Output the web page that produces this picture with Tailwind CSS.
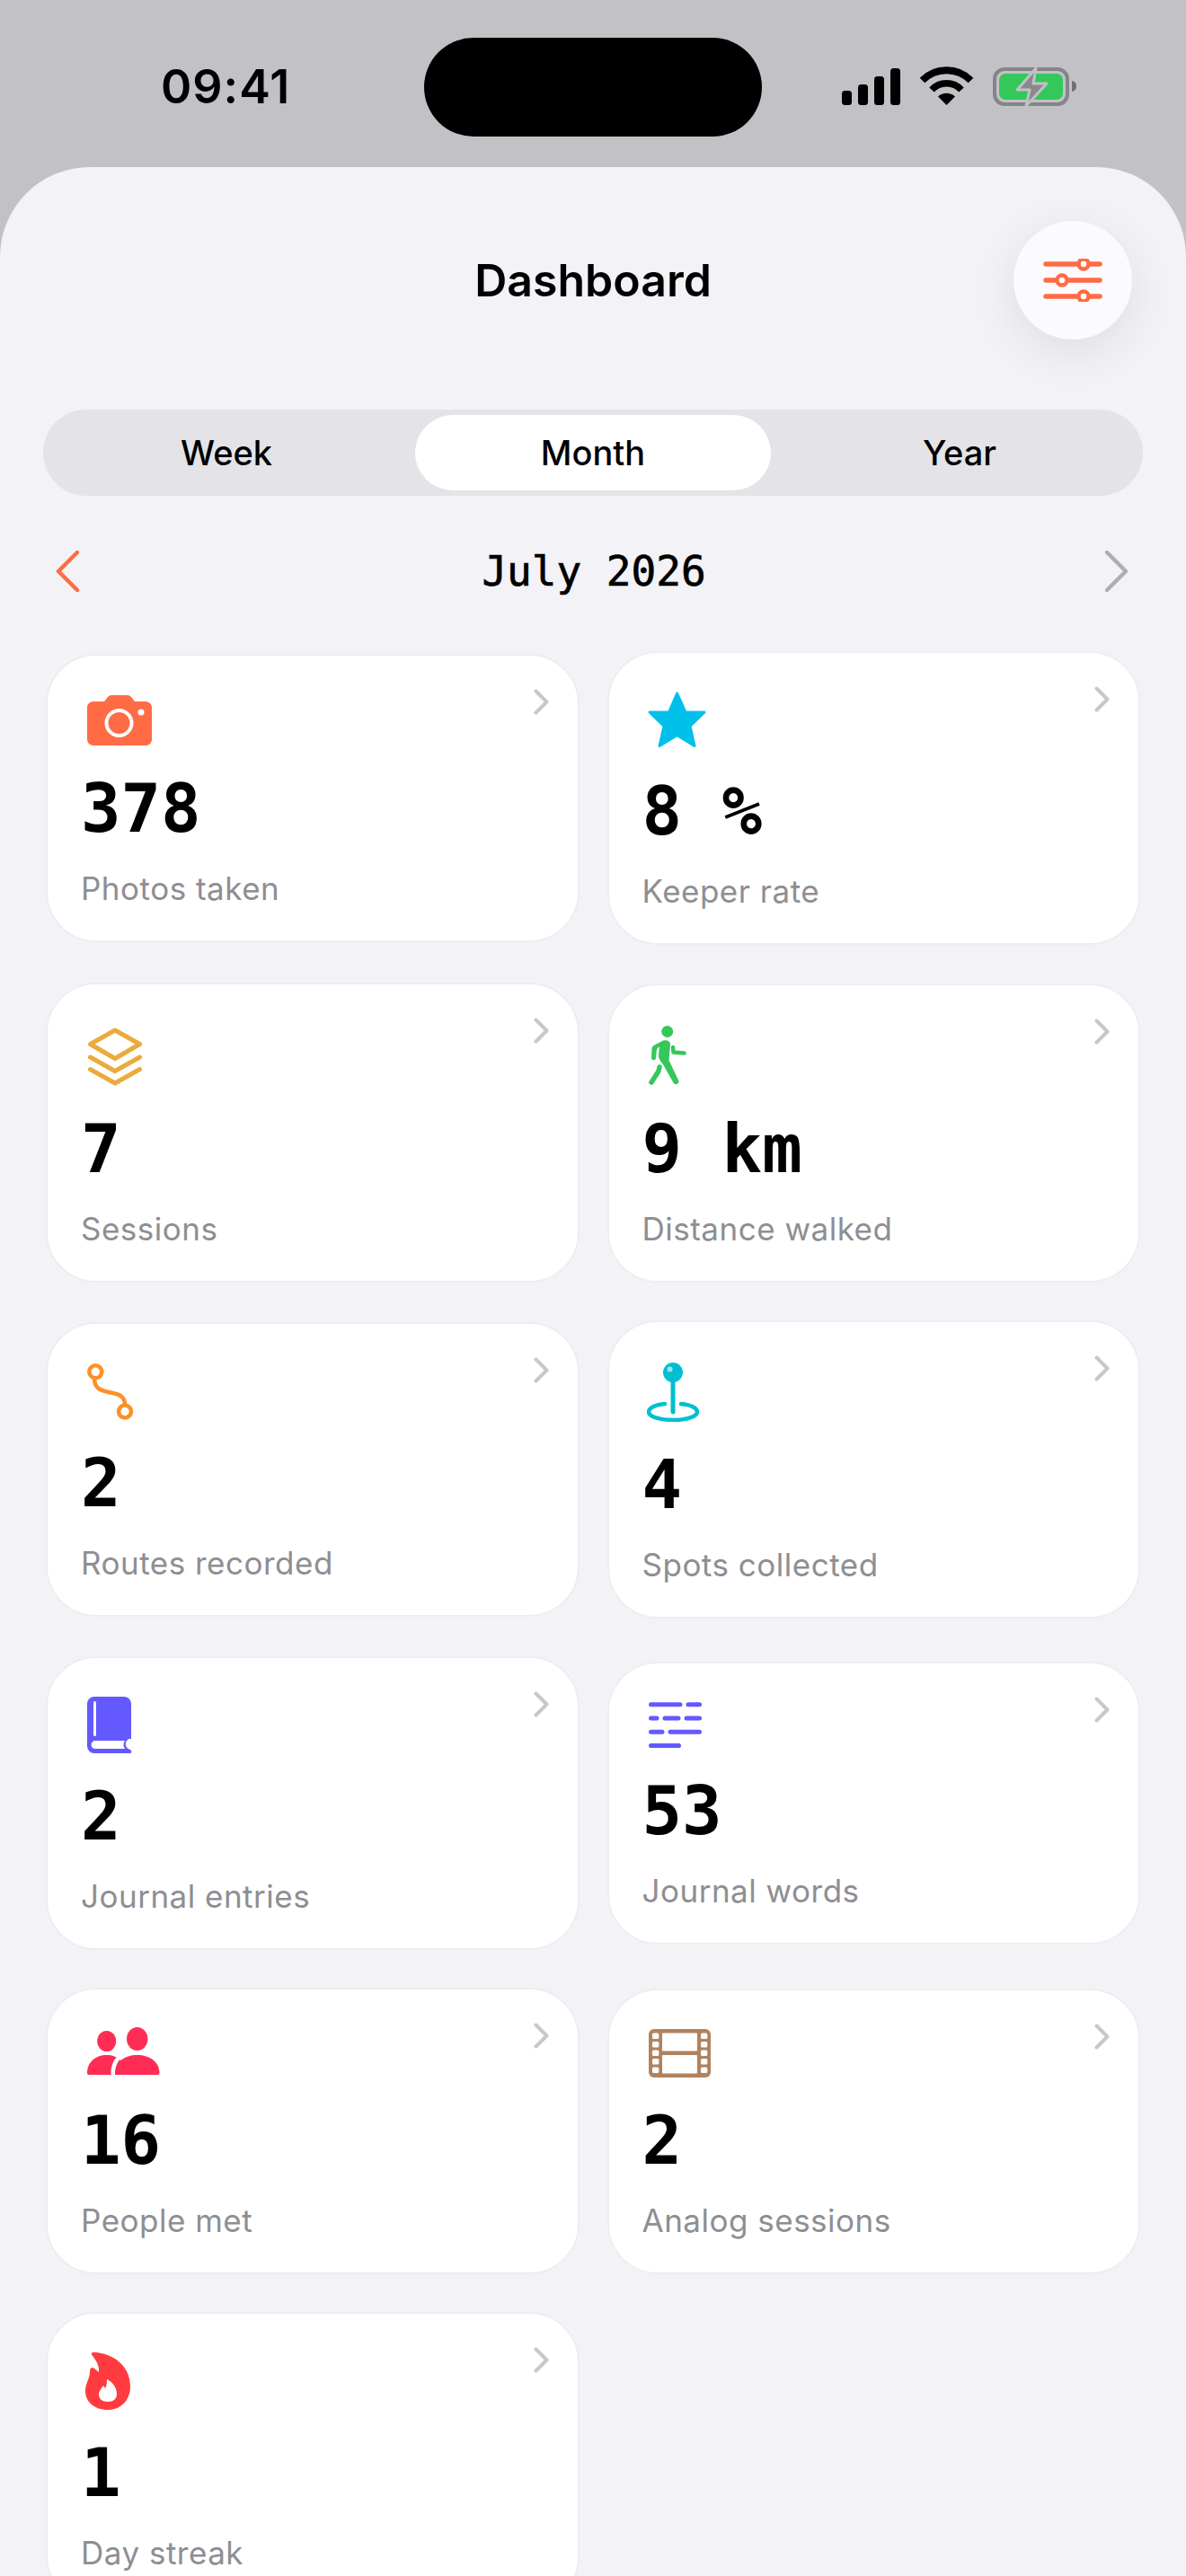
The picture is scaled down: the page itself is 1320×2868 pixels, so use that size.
<!DOCTYPE html>
<html lang="en">
<head>
  <meta charset="UTF-8" />
  <title>Dashboard</title>
  <script src="https://cdn.jsdelivr.net/npm/@tailwindcss/browser@4"></script>
</head>
<body class="bg-[#c2c1c6] [font-family:'Inter',sans-serif]">
<div class="w-[1320px] h-[2868px] overflow-hidden flex flex-col">

  <!-- status bar -->
  <div class="h-[186px] shrink-0 pt-[42px] pl-[179px] flex items-start">
    <div class="w-[293px] h-[110px] flex items-center text-[52px] font-semibold text-black tracking-[1px]">09:41</div>
    <div class="w-[376px] h-[110px] rounded-full bg-black"></div>
    <div class="ml-[89px] h-[110px] flex items-center">
      <svg width="262" height="46" viewBox="937 74 262 46">
        <rect x="937" y="101" width="11" height="16" rx="3.5" fill="#000"/>
        <rect x="955" y="94" width="11" height="23" rx="3.5" fill="#000"/>
        <rect x="973" y="85" width="11" height="32" rx="3.5" fill="#000"/>
        <rect x="991" y="76" width="11" height="41" rx="3.5" fill="#000"/>
        <path d="M1026.5 89.5A38 38 0 0 1 1080.5 89.5" fill="none" stroke="#000" stroke-width="8"/>
        <path d="M1037 100A22.5 22.5 0 0 1 1070 100" fill="none" stroke="#000" stroke-width="7.5"/>
        <path d="M1053.5 117L1044 107.5A14 14 0 0 1 1063 107.5Z" fill="#000"/>
        <rect x="1107" y="77" width="81" height="39" rx="11" fill="none" stroke="#858589" stroke-width="4"/>
        <rect x="1112" y="82" width="71" height="29" rx="7" fill="#34c85a"/>
        <path d="M1193 90a6 6 0 0 1 5 6a6 6 0 0 1-5 6Z" fill="#6f6f73"/>
        <path d="M1153 76L1132 100L1146 100L1142 118L1165 93L1150 93Z" fill="#8a8a8e" stroke="#c2c1c6" stroke-width="3" stroke-linejoin="round"/>
      </svg>
    </div>
  </div>

  <!-- sheet -->
  <div class="flex-1 bg-[#f2f2f7] rounded-t-[100px] pt-[60px]">
    <div class="px-[60px] grid grid-cols-[132px_1fr_132px] items-center">
      <div></div>
      <h1 class="text-center text-[50px] font-semibold text-black">Dashboard</h1>
      <button class="w-[132px] h-[132px] rounded-full bg-[#fbfbfe] shadow-[0_14px_56px_rgba(0,0,0,0.09)] flex items-center justify-center">
        <svg width="66" height="48" viewBox="0 0 66 48" fill="none" stroke="#ff6b45" stroke-width="6" stroke-linecap="round">
          <path d="M3 6H63M3 24H63M3 42H63" stroke-width="5.5"/>
          <circle cx="45" cy="6" r="5.5" fill="#fff" stroke-width="4.5"/>
          <circle cx="21" cy="24" r="5.5" fill="#fff" stroke-width="4.5"/>
          <circle cx="45" cy="42" r="5.5" fill="#fff" stroke-width="4.5"/>
        </svg>
      </button>
    </div>

    <div class="mt-[78px] mx-[48px] h-[96px] rounded-full bg-[#e3e3e8] grid grid-cols-3 text-[38px] font-[450] text-black">
      <div class="p-[6px]"><div class="h-full flex items-center justify-center">Week</div></div>
      <div class="p-[6px]"><div class="h-full rounded-full bg-white flex items-center justify-center">Month</div></div>
      <div class="p-[6px]"><div class="h-full flex items-center justify-center">Year</div></div>
    </div>

    <div class="mt-[48px] h-[72px] pl-[62px] pr-[64px] flex items-center justify-between">
      <svg width="26" height="46" viewBox="0 0 26 46" fill="none" stroke="#ff6b45" stroke-width="4.5" stroke-linecap="round" stroke-linejoin="round"><path d="M24 2L3 23L24 44"/></svg>
      <span class="text-[46px] text-black [font-family:'DejaVu_Sans_Mono',monospace] [-webkit-text-stroke:0.7px_black] translate-x-[2px]">July 2026</span>
      <svg width="26" height="46" viewBox="0 0 26 46" fill="none" stroke="#aeaeb2" stroke-width="4.5" stroke-linecap="round" stroke-linejoin="round"><path d="M2 2L23 23L2 44"/></svg>
    </div>

    <div class="mt-[53px] mx-[51px] grid grid-cols-2 gap-x-[31px] gap-y-[42px] items-center">

      <!-- photos -->
      <div class="rounded-[56px] bg-white border-2 border-[#eeeef1] pt-[37px] pl-[37px] pr-[32px] pb-[38px]">
        <div class="flex justify-between items-start">
          <svg class="mt-[7px] ml-[7px]" width="72" height="56" viewBox="0 0 72 56">
            <path d="M7 7H19L23 2C24 .7 25.500 0 27 0H45C46.500 0 48 .7 49 2L53 7H65C69 7 72 10 72 14V49C72 53 69 56 65 56H7C3 56 0 53 0 49V14C0 10 3 7 7 7Z" fill="#ff6b45"/>
            <circle cx="35.500" cy="31" r="14" fill="none" stroke="#fff" stroke-width="4"/>
            <circle cx="60" cy="19" r="3.500" fill="#fff"/>
          </svg>
          <svg width="17" height="29" viewBox="0 0 17 29" fill="none" stroke="#c7c7cc" stroke-width="4" stroke-linecap="round" stroke-linejoin="round"><path d="M2.500 2.500L14.500 14.500L2.500 26.500"/></svg>
        </div>
        <div class="mt-[34px] text-[74px] leading-[72px] font-bold text-black [font-family:'DejaVu_Sans_Mono',monospace]">378</div>
        <div class="mt-[33px] text-[35px] leading-[40px] tracking-[0.5px] text-[#8e8e93]">Photos taken</div>
      </div>

      <!-- keeper -->
      <div class="rounded-[56px] bg-white border-2 border-[#eeeef1] pt-[37px] pl-[37px] pr-[32px] pb-[38px]">
        <div class="flex justify-between items-start">
          <svg class="mt-[6px] ml-[6px]" width="65" height="63" viewBox="0 0 65 63">
            <path d="M32.600 2L42 23H63L47 38.300L52 60.500L32.600 48.500L13 60.500L18 38.300L2 23H23.500Z" fill="#00c0ea" stroke="#00c0ea" stroke-width="3" stroke-linejoin="round"/>
          </svg>
          <svg width="17" height="29" viewBox="0 0 17 29" fill="none" stroke="#c7c7cc" stroke-width="4" stroke-linecap="round" stroke-linejoin="round"><path d="M2.500 2.500L14.500 14.500L2.500 26.500"/></svg>
        </div>
        <div class="mt-[34px] text-[74px] leading-[72px] font-bold text-black [font-family:'DejaVu_Sans_Mono',monospace] whitespace-pre">8 %</div>
        <div class="mt-[33px] text-[35px] leading-[40px] tracking-[0.5px] text-[#8e8e93]">Keeper rate</div>
      </div>

      <!-- sessions -->
      <div class="rounded-[56px] bg-white border-2 border-[#eeeef1] pt-[37px] pl-[37px] pr-[32px] pb-[38px]">
        <div class="flex justify-between items-start">
          <svg class="mt-[11px] ml-[8px]" width="60" height="65" viewBox="0 0 60 65" fill="none" stroke="#ebaa3c" stroke-width="5" stroke-linecap="round" stroke-linejoin="round">
            <path d="M30 3L57.500 18.500L30 34.500L2.500 18.500Z"/>
            <path d="M2.500 33L30 48.500L57.500 33"/>
            <path d="M2.500 46.500L30 62L57.500 46.500"/>
          </svg>
          <svg width="17" height="29" viewBox="0 0 17 29" fill="none" stroke="#c7c7cc" stroke-width="4" stroke-linecap="round" stroke-linejoin="round"><path d="M2.500 2.500L14.500 14.500L2.500 26.500"/></svg>
        </div>
        <div class="mt-[34px] text-[74px] leading-[72px] font-bold text-black [font-family:'DejaVu_Sans_Mono',monospace]">7</div>
        <div class="mt-[33px] text-[35px] leading-[40px] tracking-[0.5px] text-[#8e8e93]">Sessions</div>
      </div>

      <!-- distance -->
      <div class="rounded-[56px] bg-white border-2 border-[#eeeef1] pt-[37px] pl-[37px] pr-[32px] pb-[38px]">
        <div class="flex justify-between items-start">
          <svg class="mt-[8px] ml-[7px]" width="42" height="67" viewBox="0 0 42 67">
            <circle cx="20.700" cy="6.500" r="6.500" fill="#34c85a"/>
            <path d="M16 16.500C20 15.500 24.500 17 24 21.500L22.500 38.500L33 60.500A3 3 0 0 1 27.500 63.500L16 43C12.500 39 10.500 36 11 32L12 23L9 26L8 36A2.500 2.500 0 0 1 3 35.500L3.500 26C3.500 24 4.500 23 5.500 22Z" fill="#34c85a"/>
            <path d="M12 46L11 50.500L3 63" fill="none" stroke="#34c85a" stroke-width="5.500" stroke-linecap="round" stroke-linejoin="round"/>
            <path d="M27 24L27.500 29.500L39.500 30.500" fill="none" stroke="#34c85a" stroke-width="4.500" stroke-linecap="round" stroke-linejoin="round"/>
          </svg>
          <svg width="17" height="29" viewBox="0 0 17 29" fill="none" stroke="#c7c7cc" stroke-width="4" stroke-linecap="round" stroke-linejoin="round"><path d="M2.500 2.500L14.500 14.500L2.500 26.500"/></svg>
        </div>
        <div class="mt-[34px] text-[74px] leading-[72px] font-bold text-black [font-family:'DejaVu_Sans_Mono',monospace] whitespace-pre">9 km</div>
        <div class="mt-[33px] text-[35px] leading-[40px] tracking-[0.5px] text-[#8e8e93]">Distance walked</div>
      </div>

      <!-- routes -->
      <div class="rounded-[56px] bg-white border-2 border-[#eeeef1] pt-[37px] pl-[37px] pr-[32px] pb-[38px]">
        <div class="flex justify-between items-start">
          <svg class="mt-[7px] ml-[7px]" width="52" height="63" viewBox="0 0 52 63" fill="none" stroke="#ff9024" stroke-width="4.500">
            <circle cx="9.300" cy="9.300" r="7"/>
            <circle cx="42" cy="53.500" r="7"/>
            <path d="M8 16.500C8 27 14 29.500 22 31.500C32 34 42 34 42 46"/>
          </svg>
          <svg width="17" height="29" viewBox="0 0 17 29" fill="none" stroke="#c7c7cc" stroke-width="4" stroke-linecap="round" stroke-linejoin="round"><path d="M2.500 2.500L14.500 14.500L2.500 26.500"/></svg>
        </div>
        <div class="mt-[34px] text-[74px] leading-[72px] font-bold text-black [font-family:'DejaVu_Sans_Mono',monospace]">2</div>
        <div class="mt-[33px] text-[35px] leading-[40px] tracking-[0.5px] text-[#8e8e93]">Routes recorded</div>
      </div>

      <!-- spots -->
      <div class="rounded-[56px] bg-white border-2 border-[#eeeef1] pt-[37px] pl-[37px] pr-[32px] pb-[38px]">
        <div class="flex justify-between items-start">
          <svg class="mt-[8px] ml-[5px]" width="58" height="66" viewBox="0 0 58 66">
            <path d="M20 46C9 47 2 50.500 2 55C2 60 14 64 29 64C44 64 56 60 56 55C56 50.500 49 47 38 46" fill="none" stroke="#00bfd0" stroke-width="4.500" stroke-linecap="round"/>
            <path d="M29 18V55" stroke="#00bfd0" stroke-width="5" stroke-linecap="round"/>
            <circle cx="29" cy="11" r="11" fill="#00bfd0"/>
            <circle cx="25.500" cy="7.500" r="3" fill="#9be6f0"/>
          </svg>
          <svg width="17" height="29" viewBox="0 0 17 29" fill="none" stroke="#c7c7cc" stroke-width="4" stroke-linecap="round" stroke-linejoin="round"><path d="M2.500 2.500L14.500 14.500L2.500 26.500"/></svg>
        </div>
        <div class="mt-[34px] text-[74px] leading-[72px] font-bold text-black [font-family:'DejaVu_Sans_Mono',monospace]">4</div>
        <div class="mt-[33px] text-[35px] leading-[40px] tracking-[0.5px] text-[#8e8e93]">Spots collected</div>
      </div>

      <!-- journal entries -->
      <div class="rounded-[56px] bg-white border-2 border-[#eeeef1] pt-[37px] pl-[37px] pr-[32px] pb-[38px]">
        <div class="flex justify-between items-start">
          <svg class="mt-[6px] ml-[7px]" width="50" height="63" viewBox="0 0 50 63">
            <rect x="0" y="0" width="49" height="63" rx="8" fill="#6359ff"/>
            <rect x="7" y="5" width="3" height="39" rx="1.500" fill="#fff"/>
            <path d="M9 49H42C40 52 40 55 42 58H9A4.500 4.500 0 0 1 9 49Z" fill="#fff"/>
            <path d="M50 47H46C42 50 42 55 45 57.500L49 60.500V63H50Z" fill="#fff"/>
            <path d="M42 58L47 58.500C49 59.500 50 61 49 62.500C48.500 63 47 63 46 63H40Z" fill="#6359ff"/>
          </svg>
          <svg width="17" height="29" viewBox="0 0 17 29" fill="none" stroke="#c7c7cc" stroke-width="4" stroke-linecap="round" stroke-linejoin="round"><path d="M2.500 2.500L14.500 14.500L2.500 26.500"/></svg>
        </div>
        <div class="mt-[34px] text-[74px] leading-[72px] font-bold text-black [font-family:'DejaVu_Sans_Mono',monospace]">2</div>
        <div class="mt-[33px] text-[35px] leading-[40px] tracking-[0.5px] text-[#8e8e93]">Journal entries</div>
      </div>

      <!-- journal words -->
      <div class="rounded-[56px] bg-white border-2 border-[#eeeef1] pt-[37px] pl-[37px] pr-[32px] pb-[38px]">
        <div class="flex justify-between items-start">
          <svg class="mt-[6px] ml-[7px]" width="60" height="51" viewBox="0 0 60 51" fill="none" stroke="#6359ff" stroke-width="5" stroke-linecap="round">
            <path d="M2.500 2.700H35M44 2.700H56.500"/>
            <path d="M2.500 18H9M18 18H33M42 18H56.500"/>
            <path d="M2.500 33.300H15M24 33.300H56.500"/>
            <path d="M2.500 48.500H33.500"/>
          </svg>
          <svg width="17" height="29" viewBox="0 0 17 29" fill="none" stroke="#c7c7cc" stroke-width="4" stroke-linecap="round" stroke-linejoin="round"><path d="M2.500 2.500L14.500 14.500L2.500 26.500"/></svg>
        </div>
        <div class="mt-[34px] text-[74px] leading-[72px] font-bold text-black [font-family:'DejaVu_Sans_Mono',monospace]">53</div>
        <div class="mt-[33px] text-[35px] leading-[40px] tracking-[0.5px] text-[#8e8e93]">Journal words</div>
      </div>

      <!-- people -->
      <div class="rounded-[56px] bg-white border-2 border-[#eeeef1] pt-[37px] pl-[37px] pr-[32px] pb-[38px]">
        <div class="flex justify-between items-start">
          <svg class="mt-[5px] mb-[2px] ml-[7px]" width="81" height="54" viewBox="0 0 81 54">
            <ellipse cx="21.700" cy="15.500" rx="10.500" ry="11.500" fill="#ff2d55"/>
            <ellipse cx="55.700" cy="13" rx="11.700" ry="13" fill="#ff2d55"/>
            <path d="M0 51C0 39 9 31 21.700 31C34 31 43 39 43 53H2C1 53 0 52 0 51Z" fill="#ff2d55"/>
            <path d="M31 51C31 39 41.500 31 55.700 31C70 31 80.500 39 80.500 51C80.500 52 79.500 53 78.500 53H33C32 53 31 52 31 51Z" fill="#ff2d55"/>
            <path d="M31 53H26.500V51C26.500 42 30 35 36 30.500L40 32.500C34 37 31 44 31 51Z" fill="#fff"/>
          </svg>
          <svg width="17" height="29" viewBox="0 0 17 29" fill="none" stroke="#c7c7cc" stroke-width="4" stroke-linecap="round" stroke-linejoin="round"><path d="M2.500 2.500L14.500 14.500L2.500 26.500"/></svg>
        </div>
        <div class="mt-[34px] text-[74px] leading-[72px] font-bold text-black [font-family:'DejaVu_Sans_Mono',monospace]">16</div>
        <div class="mt-[33px] text-[35px] leading-[40px] tracking-[0.5px] text-[#8e8e93]">People met</div>
      </div>

      <!-- analog -->
      <div class="rounded-[56px] bg-white border-2 border-[#eeeef1] pt-[37px] pl-[37px] pr-[32px] pb-[38px]">
        <div class="flex justify-between items-start">
          <svg class="mt-[6px] ml-[7px]" width="69" height="54" viewBox="0 0 69 54">
            <rect width="69" height="54" rx="6" fill="#b0835f"/>
            <g fill="#fff">
              <rect x="15" y="4.500" width="39" height="20" rx="1"/>
              <rect x="15" y="29" width="39" height="20.500" rx="1"/>
              <rect x="4" y="4.500" width="7.300" height="6.500" rx="1.500"/>
              <rect x="4" y="14" width="7.300" height="6.500" rx="1.500"/>
              <rect x="4" y="23.500" width="7.300" height="6.500" rx="1.500"/>
              <rect x="4" y="33" width="7.300" height="6.500" rx="1.500"/>
              <rect x="4" y="42.500" width="7.300" height="6.500" rx="1.500"/>
              <rect x="58" y="4.500" width="7.300" height="6.500" rx="1.500"/>
              <rect x="58" y="14" width="7.300" height="6.500" rx="1.500"/>
              <rect x="58" y="23.500" width="7.300" height="6.500" rx="1.500"/>
              <rect x="58" y="33" width="7.300" height="6.500" rx="1.500"/>
              <rect x="58" y="42.500" width="7.300" height="6.500" rx="1.500"/>
            </g>
          </svg>
          <svg width="17" height="29" viewBox="0 0 17 29" fill="none" stroke="#c7c7cc" stroke-width="4" stroke-linecap="round" stroke-linejoin="round"><path d="M2.500 2.500L14.500 14.500L2.500 26.500"/></svg>
        </div>
        <div class="mt-[34px] text-[74px] leading-[72px] font-bold text-black [font-family:'DejaVu_Sans_Mono',monospace]">2</div>
        <div class="mt-[33px] text-[35px] leading-[40px] tracking-[0.5px] text-[#8e8e93]">Analog sessions</div>
      </div>

      <!-- streak -->
      <div class="rounded-[56px] bg-white border-2 border-[#eeeef1] pt-[37px] pl-[37px] pr-[32px] pb-[38px]">
        <div class="flex justify-between items-start">
          <svg class="mt-[6px] ml-[5px]" width="50" height="64" viewBox="0 0 50 64">
            <path d="M7 2.500C6 .5 8 0 10 0C30 1 50 14 50 38C50 54 39 64 25 64C10 64 0 55 0 43C0 34 5 30 5 21C5 17 8 16 10 18L15 22C16 14 11 8 7 2.500Z" fill="#ff3b3f"/>
            <path d="M24 30C30 33 35 39 35 46C35 52 31 55 25 55C19 55 15 52 15 47C15 43 18 40 20 37L22 40C24 37 24 33 24 30Z" fill="#fff"/>
          </svg>
          <svg width="17" height="29" viewBox="0 0 17 29" fill="none" stroke="#c7c7cc" stroke-width="4" stroke-linecap="round" stroke-linejoin="round"><path d="M2.500 2.500L14.500 14.500L2.500 26.500"/></svg>
        </div>
        <div class="mt-[34px] text-[74px] leading-[72px] font-bold text-black [font-family:'DejaVu_Sans_Mono',monospace]">1</div>
        <div class="mt-[33px] text-[35px] leading-[40px] tracking-[0.5px] text-[#8e8e93]">Day streak</div>
      </div>

    </div>
  </div>
</div>
</body>
</html>
